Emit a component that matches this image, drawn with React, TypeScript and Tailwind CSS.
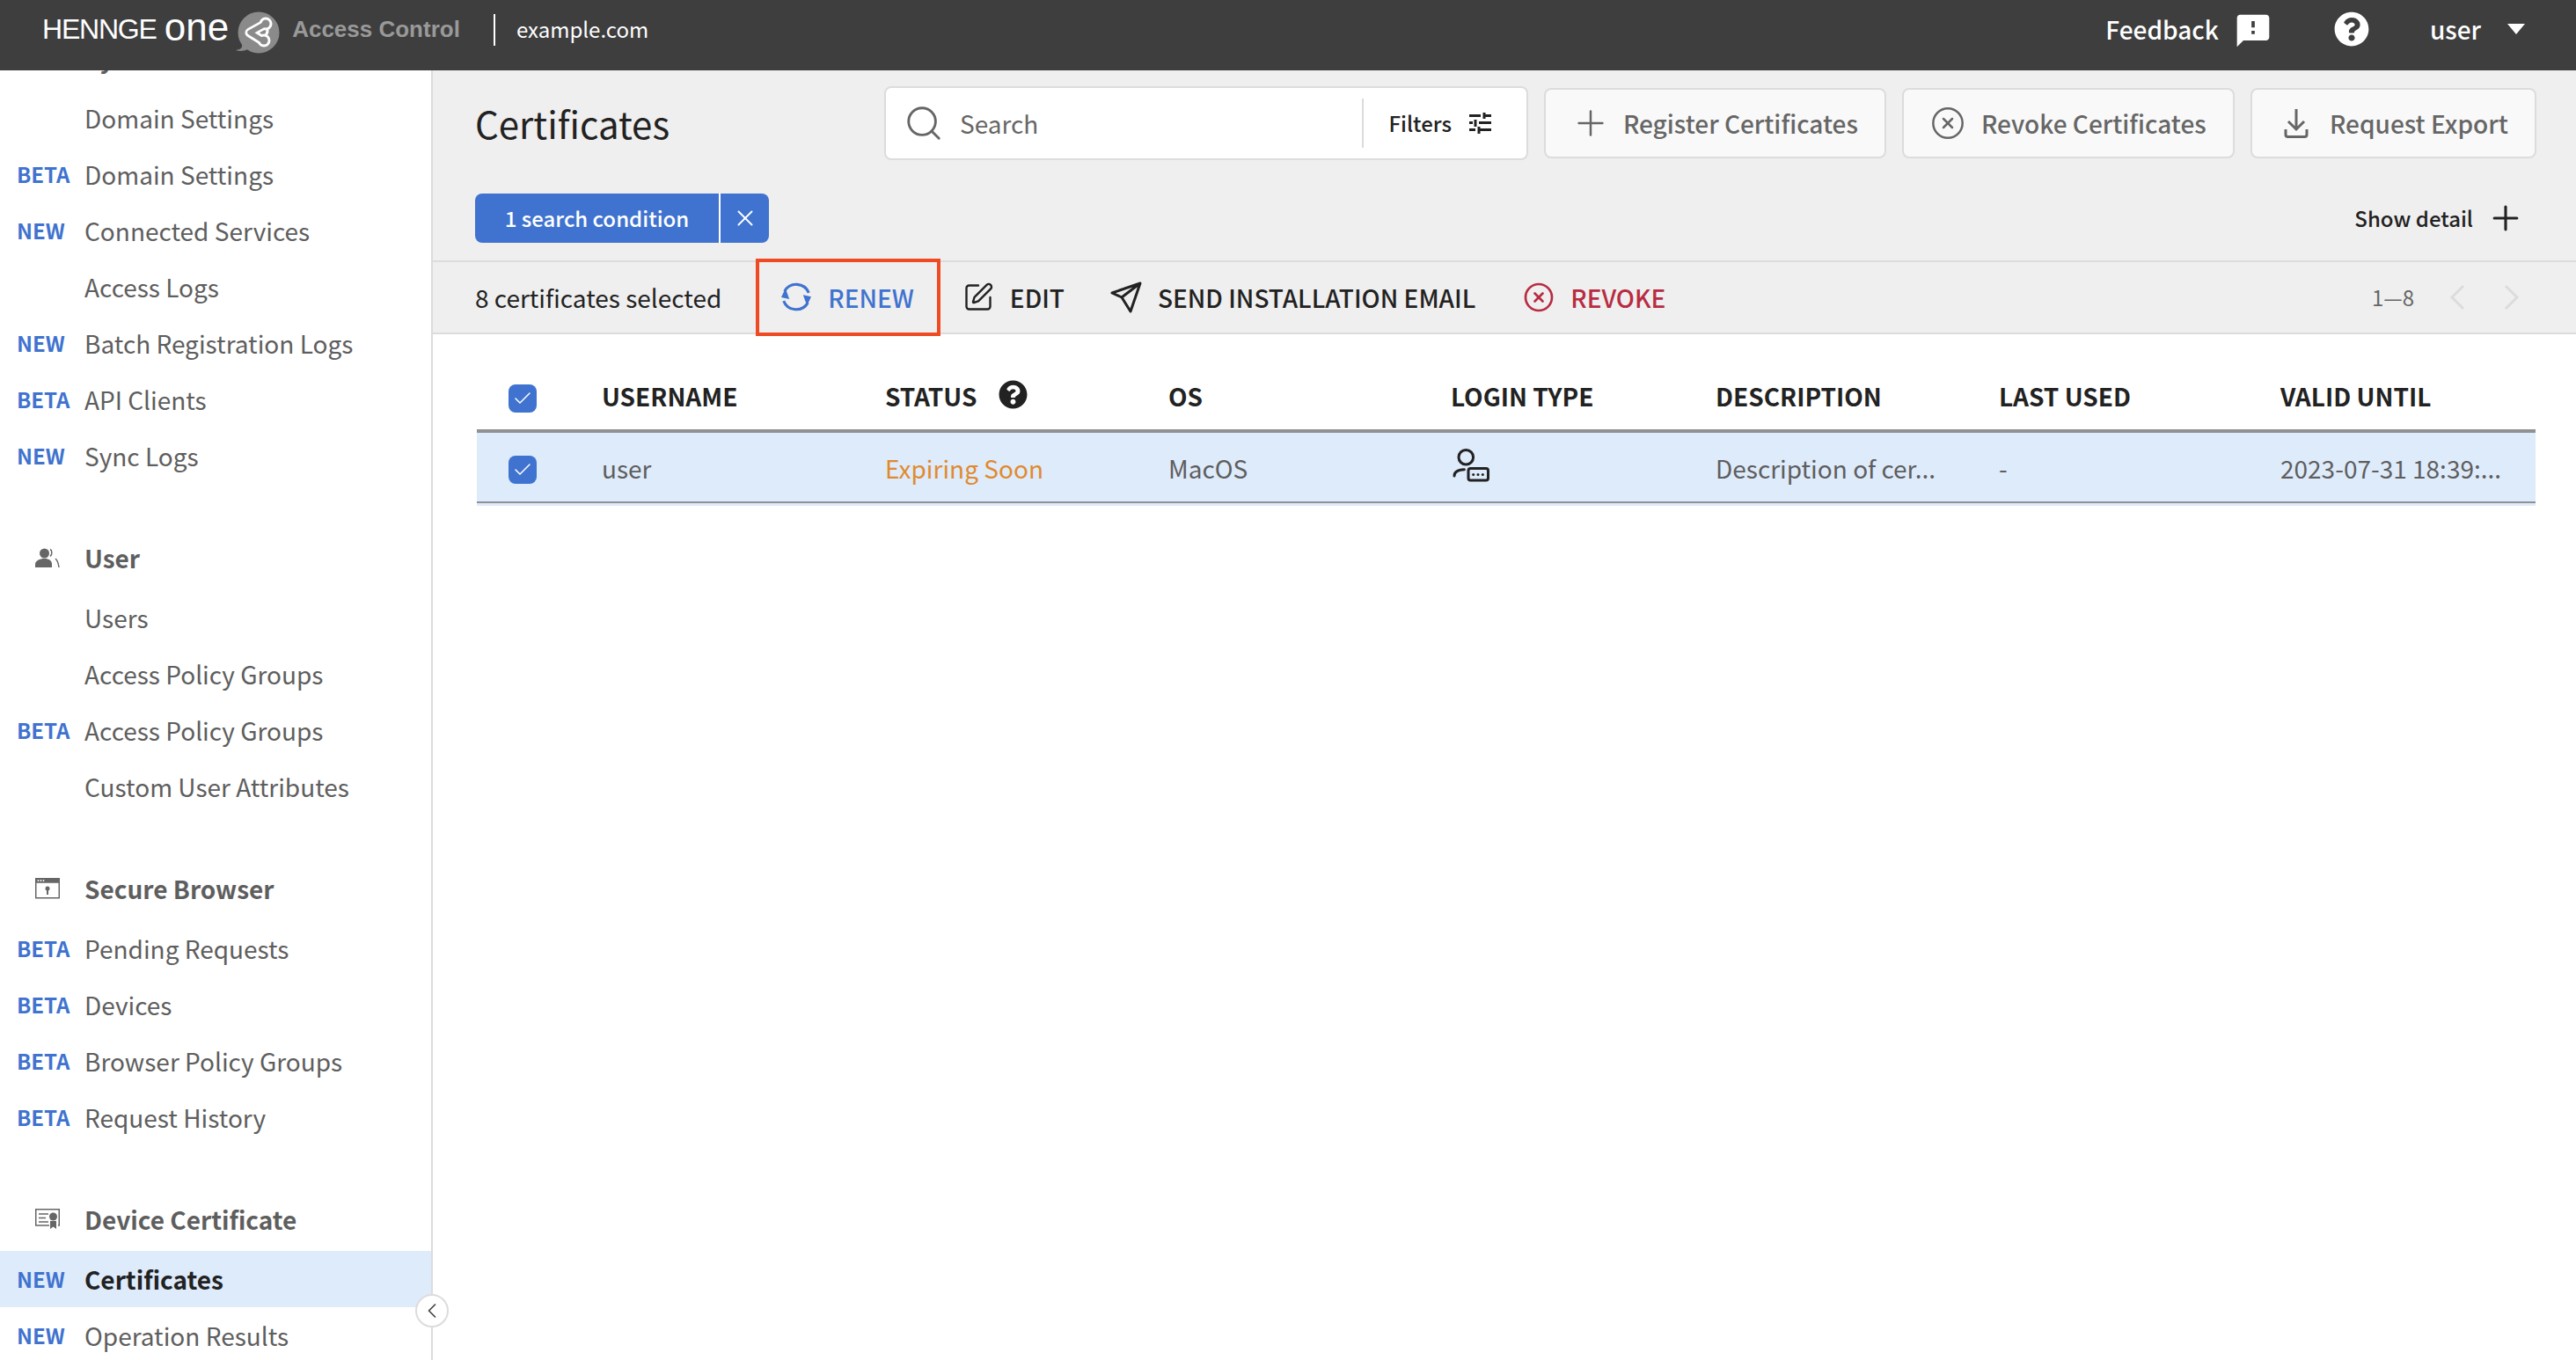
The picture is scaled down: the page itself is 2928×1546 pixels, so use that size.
import { Check, ChevronLeft, CircleX, Plus, Search, SquarePen, X } from 'lucide-react'
import { ReactNode } from 'react'
import { FaQuestionCircle } from 'react-icons/fa'
import { MdFeedback } from 'react-icons/md'

const cellCols = 'grid grid-cols-[142px_322px_322px_321px_301px_322px_320px_1fr]'

function UserIcon() {
  return (
    <svg width="28" height="24" viewBox="0 0 28 24" fill="none">
      <circle cx="10.5" cy="7" r="5.5" fill="#666" />
      <path d="M0 23v-3.5c0-4 5-6.5 10.5-6.5S19 15.500 19 19.500V23z" fill="#666" />
      <path d="M17 2.500c2.500 1 2.500 6 0 8M23 13c2.500 2 3.500 6 4 10" stroke="#666" strokeWidth="1.500" />
    </svg>
  )
}

function BrowserIcon() {
  return (
    <svg width="28" height="24" viewBox="0 0 28 24" fill="none">
      <rect x="0.750" y="0.750" width="26.500" height="22" stroke="#666" strokeWidth="1.500" />
      <rect x="0.750" y="0.750" width="26.500" height="5" fill="#666" />
      <circle cx="3.500" cy="3" r="0.900" fill="#fff" />
      <circle cx="6.500" cy="3" r="0.900" fill="#fff" />
      <circle cx="9.500" cy="3" r="0.900" fill="#fff" />
      <circle cx="14" cy="12" r="2.500" fill="#666" />
      <path d="M14 13v6" stroke="#666" strokeWidth="2" />
    </svg>
  )
}

function CertIcon() {
  return (
    <svg width="28" height="24" viewBox="0 0 28 24" fill="none">
      <path d="M16 19H.750V.750h26.500V19H26" stroke="#666" strokeWidth="1.500" />
      <path d="M4 6h11M4 10.500h8M4 15h11" stroke="#666" strokeWidth="1.500" />
      <circle cx="20.500" cy="9" r="4.500" fill="#666" />
      <path d="M17 14h7v9l-3.500-2.500L17 23z" fill="#666" />
    </svg>
  )
}

function LogoMark() {
  return (
    <svg width="56" height="56" viewBox="0 0 56 56" fill="none" className="shrink-0">
      <circle cx="28" cy="26" r="23.500" fill="#8a8a8a" />
      <path d="M9 39c1 5-2 6-7 7 5 2 11 1 15-2z" fill="#8a8a8a" />
      <g stroke="#fff" strokeWidth="11" strokeLinecap="round" strokeLinejoin="round">
        <path d="M36 16 18 26l16 10" />
      </g>
      <circle cx="36" cy="16" r="7.500" fill="#fff" />
      <circle cx="34" cy="35" r="7.500" fill="#fff" />
      <g stroke="#8a8a8a" strokeWidth="5.500" strokeLinecap="round" strokeLinejoin="round">
        <path d="M36 16 18 26l16 10" />
      </g>
      <circle cx="36" cy="16" r="4.500" fill="#8a8a8a" />
      <circle cx="34" cy="35" r="4.500" fill="#8a8a8a" />
      <path d="M37 21c2 3 1 6-2 9" stroke="#fff" strokeWidth="3" />
    </svg>
  )
}

function RenewIcon() {
  return (
    <svg width="34" height="34" viewBox="0 0 100 100" fill="none" stroke="#3f73cf" strokeWidth="9">
      <path d="M11 30A45 45 0 0 1 92 35" />
      <path d="M89 68A45 45 0 0 1 8 62" />
      <path d="M14 20 27 56 0 50z" fill="#3f73cf" stroke="none" />
      <path d="M86 78 73 42l27 6z" fill="#3f73cf" stroke="none" />
    </svg>
  )
}

function SendIcon() {
  return (
    <svg width="36" height="36" viewBox="0 0 36 36" fill="none" stroke="#222" strokeWidth="3" strokeLinejoin="round">
      <path d="M2 13 34 2 23 34 13 18zM13 18 34 2" />
    </svg>
  )
}

function DownloadIcon() {
  return (
    <svg width="28" height="34" viewBox="0 0 28 34" fill="none" stroke="#666" strokeWidth="3">
      <path d="M14 1v22M5 15l9 9 9-9" />
      <path d="M2 24v6c0 1.500 1 2.500 2.500 2.500h19c1.500 0 2.500-1 2.500-2.500v-6" />
    </svg>
  )
}

function FiltersIcon() {
  return (
    <svg width="25" height="24" viewBox="0 0 25 24" fill="none" stroke="#222" strokeWidth="3">
      <path d="M0 3.500h13M17 0v7M17 3.500h8M0 11.500h4M7 8v8M11 11.500h14M0 19.500h7M11 16v8M11 19.500h14" />
    </svg>
  )
}

function LoginTypeIcon() {
  return (
    <svg width="50" height="44" viewBox="0 0 50 44" fill="none" stroke="#222" strokeWidth="3" className="-mt-[7px] -ml-[2px]">
      <circle cx="19.300" cy="12.700" r="8.300" />
      <path d="M6 34c0-4 3-7 11.300-7.300" strokeLinecap="round" />
      <rect x="22" y="25.500" width="22.500" height="13.500" rx="2.500" />
      <circle cx="27.700" cy="32.500" r="1.500" fill="#222" stroke="none" />
      <circle cx="33" cy="32.500" r="1.500" fill="#222" stroke="none" />
      <circle cx="38.300" cy="32.500" r="1.500" fill="#222" stroke="none" />
    </svg>
  )
}

function Pager({ flip }: { flip?: boolean }) {
  return (
    <svg width="18" height="30" viewBox="0 0 18 30" fill="none" stroke="#dcdcdc" strokeWidth="3" className={flip ? 'rotate-180' : ''}>
      <path d="M16 2 3 15l13 13" />
    </svg>
  )
}

interface NavItem {
  label: string
  badge?: 'BETA' | 'NEW'
  active?: boolean
}

interface NavGroup {
  title: string
  icon?: ReactNode
  items: NavItem[]
}

const groups: NavGroup[] = [
  {
    title: 'System',
    items: [
      { label: 'Domain Settings' },
      { label: 'Domain Settings', badge: 'BETA' },
      { label: 'Connected Services', badge: 'NEW' },
      { label: 'Access Logs' },
      { label: 'Batch Registration Logs', badge: 'NEW' },
      { label: 'API Clients', badge: 'BETA' },
      { label: 'Sync Logs', badge: 'NEW' },
    ],
  },
  {
    title: 'User',
    icon: <UserIcon />,
    items: [
      { label: 'Users' },
      { label: 'Access Policy Groups' },
      { label: 'Access Policy Groups', badge: 'BETA' },
      { label: 'Custom User Attributes' },
    ],
  },
  {
    title: 'Secure Browser',
    icon: <BrowserIcon />,
    items: [
      { label: 'Pending Requests', badge: 'BETA' },
      { label: 'Devices', badge: 'BETA' },
      { label: 'Browser Policy Groups', badge: 'BETA' },
      { label: 'Request History', badge: 'BETA' },
    ],
  },
  {
    title: 'Device Certificate',
    icon: <CertIcon />,
    items: [
      { label: 'Certificates', badge: 'NEW', active: true },
      { label: 'Operation Results', badge: 'NEW' },
    ],
  },
]

function Header() {
  return (
    <header className="relative z-10 flex h-20 shrink-0 items-center bg-[#3e3e3e] pb-[14px] pl-[48px] pr-[58px] text-white">
      <span className="font-['Liberation_Sans',sans-serif] text-[32px] leading-none tracking-[-1.200px]">HENNGE</span>
      <span className="ml-[9px] font-['Liberation_Sans',sans-serif] text-[44px] leading-none -translate-y-[2px]">one</span>
      <span className="ml-[6px] translate-y-[6px]">
        <LogoMark />
      </span>
      <span className="ml-[10px] font-['Liberation_Sans',sans-serif] text-[26px] font-bold text-[#999]">Access Control</span>
      <span className="ml-[38px] h-9 w-[2px] translate-y-[1px] bg-white" />
      <span className="ml-[24px] text-[24px]">example.com</span>
      <span className="ml-auto text-[28px] font-medium">Feedback</span>
      <MdFeedback size={44} className="ml-[17px] translate-y-[2px]" />
      <FaQuestionCircle size={40} className="ml-[70px]" />
      <span className="ml-[69px] text-[28px] font-medium">user</span>
      <svg width="20" height="12" viewBox="0 0 20 12" className="ml-[30px]">
        <path d="M0 0h20L10 12z" fill="#fff" />
      </svg>
    </header>
  )
}

function Sidebar() {
  return (
    <aside className="relative w-[492px] shrink-0 border-r-2 border-[#dcdcdc] bg-white">
      <div className="h-full overflow-hidden">
        <div className="-mt-[50px] flex flex-col gap-12">
          {groups.map((group) => (
            <section key={group.title}>
              <div className="flex h-[72px] items-center">
                <span className="flex w-[96px] justify-end pr-[28px]">{group.icon}</span>
                <span className="text-[28px] font-bold text-[#5e5e5e]">{group.title}</span>
              </div>
              {group.items.map((item, i) => (
                <div key={i} className={`flex h-16 items-center ${item.active ? 'bg-[#deebfb]' : ''}`}>
                  <span className="w-[96px] pl-[19px] text-[24px] font-semibold text-[#3f73cf]">{item.badge}</span>
                  <span className={`text-[28px] ${item.active ? 'font-bold text-[#222]' : 'text-[#5e5e5e]'}`}>{item.label}</span>
                </div>
              ))}
            </section>
          ))}
        </div>
      </div>
      <button className="absolute -right-[20px] bottom-[37px] flex h-[38px] w-[38px] items-center justify-center rounded-full border-2 border-[#dcdcdc] bg-white">
        <ChevronLeft size={28} strokeWidth={1.500} className="text-[#444]" />
      </button>
    </aside>
  )
}

function TopButton({ icon, label, className }: { icon: ReactNode; label: string; className: string }) {
  return (
    <button className={`flex h-[80px] items-center rounded-lg border-2 border-[#dcdcdc] bg-[#f9f9f9] text-[28px] font-medium whitespace-nowrap text-[#666] ${className}`}>
      {icon}
      {label}
    </button>
  )
}

function ActionItem({ icon, label, className }: { icon: ReactNode; label: string; className: string }) {
  return (
    <button className={`flex items-center gap-[18px] text-[28px] font-medium ${className}`}>
      <span className="flex w-9 justify-center">{icon}</span>
      {label}
    </button>
  )
}

function Checkbox({ className }: { className: string }) {
  return (
    <span className={`flex h-8 w-8 items-center justify-center rounded-lg bg-[#3f73cf] ${className}`}>
      <Check size={24} strokeWidth={1.500} className="text-white" />
    </span>
  )
}

function CertificatesPage() {
  return (
    <main className="flex min-w-0 flex-1 flex-col bg-white">
      <div className="flex flex-col bg-[#efefef]">
        <div className="flex h-[120px] items-center gap-[18px] pl-[48px] pr-[45px]">
          <h1 className="flex-1 text-[42px] leading-none text-[#222]">Certificates</h1>
          <div className="flex h-[84px] w-[732px] items-center rounded-lg border-2 border-[#dcdcdc] bg-white pl-[20px]">
            <Search size={46} strokeWidth={1.500} className="text-[#666]" />
            <span className="ml-[18px] flex-1 text-[28px] text-[#666]">Search</span>
            <span className="h-[56px] w-[2px] bg-[#dcdcdc]" />
            <span className="ml-[28px] text-[24px] font-medium text-[#222]">Filters</span>
            <span className="ml-[20px] mr-[40px]">
              <FiltersIcon />
            </span>
          </div>
          <TopButton icon={<Plus size={46} strokeWidth={1.300} className="mr-[14px]" />} label="Register Certificates" className="w-[389px] pl-[28px]" />
          <TopButton icon={<CircleX size={40} strokeWidth={1.500} className="mr-[18px]" />} label="Revoke Certificates" className="w-[378px] pl-[30px]" />
          <TopButton icon={<span className="mr-[24px]"><DownloadIcon /></span>} label="Request Export" className="w-[325px] pl-[36px]" />
        </div>

        <div className="mt-[20px] flex h-[56px] items-center pl-[48px] pr-[58px]">
          <div className="flex h-full items-stretch overflow-hidden rounded-lg bg-[#3f73cf] text-white">
            <span className="flex w-[279px] items-center justify-center border-r-2 border-white text-[24px] font-medium">1 search condition</span>
            <span className="flex w-[55px] items-center justify-center">
              <X size={30} strokeWidth={1.500} />
            </span>
          </div>
          <span className="ml-auto text-[24px] font-medium text-[#222]">Show detail</span>
          <Plus size={44} strokeWidth={1.700} className="ml-[15px] text-[#222]" />
        </div>

        <div className="mt-[20px] flex h-[84px] items-center border-y-2 border-[#dcdcdc] pl-[48px] pr-[64px]">
          <span className="mr-[39px] text-[28px] text-[#222]">8 certificates selected</span>
          <div className="relative flex h-full items-center">
            <ActionItem icon={<RenewIcon />} label="RENEW" className="px-[28px] text-[#3f73cf]" />
            <span className="absolute -top-[4px] -bottom-[4px] left-0 -right-[2px] border-4 border-[#f04a23]" />
          </div>
          <ActionItem icon={<SquarePen size={38} strokeWidth={1.600} />} label="EDIT" className="pl-[27px] pr-[26px] text-[#222]" />
          <ActionItem icon={<SendIcon />} label="SEND INSTALLATION EMAIL" className="pl-[26px] pr-[27px] text-[#222]" />
          <ActionItem icon={<CircleX size={40} strokeWidth={1.800} />} label="REVOKE" className="pl-[27px] text-[#b82c42]" />
          <span className="ml-auto text-[24px] text-[#666]">1—8</span>
          <span className="ml-[40px]">
            <Pager />
          </span>
          <span className="ml-[44px]">
            <Pager flip />
          </span>
        </div>
      </div>

      <div className="ml-[50px] mr-[46px]">
        <div className={`${cellCols} h-[112px] items-center border-b-4 border-[#919191] pt-[32px] text-[28px] font-bold whitespace-nowrap text-[#222]`}>
          <span className="pl-[36px]">
            <Checkbox className="translate-y-[3px]" />
          </span>
          <span>USERNAME</span>
          <span className="flex items-center gap-[25px]">
            STATUS
            <FaQuestionCircle size={33} className="-translate-y-[2px]" />
          </span>
          <span>OS</span>
          <span>LOGIN TYPE</span>
          <span>DESCRIPTION</span>
          <span>LAST USED</span>
          <span>VALID UNTIL</span>
        </div>
        <div className="bg-[#deebfb] pb-[3px]">
          <div className={`${cellCols} h-[80px] items-center border-b-2 border-[#919191] pt-[2px] text-[28px] whitespace-nowrap text-[#5e5e5e]`}>
            <span className="pl-[36px]">
              <Checkbox className="translate-y-[2px]" />
            </span>
            <span>user</span>
            <span className="text-[#e08a2e]">Expiring Soon</span>
            <span>MacOS</span>
            <span>
              <LoginTypeIcon />
            </span>
            <span>Description of cer...</span>
            <span>-</span>
            <span>2023-07-31 18:39:...</span>
          </div>
        </div>
      </div>
    </main>
  )
}

export default function App() {
  return (
    <div className="flex h-screen w-screen flex-col overflow-hidden bg-white font-['Noto_Sans_CJK_JP','Noto_Sans',sans-serif]">
      <Header />
      <div className="flex min-h-0 flex-1">
        <Sidebar />
        <CertificatesPage />
      </div>
    </div>
  )
}
